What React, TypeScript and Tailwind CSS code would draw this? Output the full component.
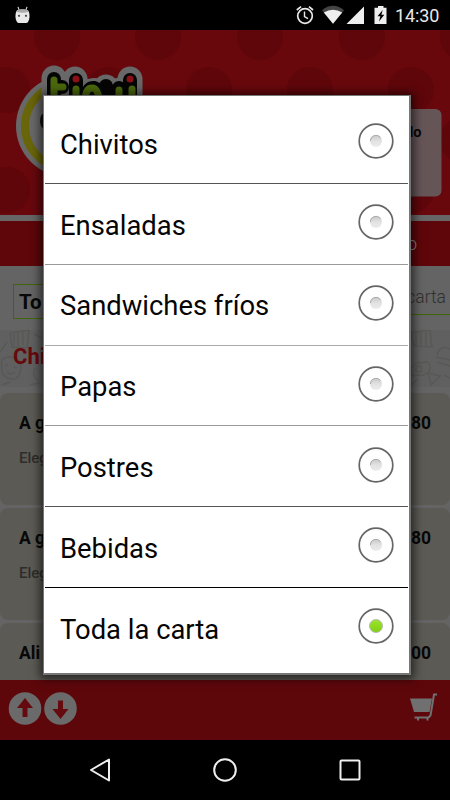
import React from 'react';

const categories = ['Chivitos', 'Ensaladas', 'Sandwiches fríos', 'Papas', 'Postres', 'Bebidas', 'Toda la carta'];

// divider under each row, the last row has none
const dividers = ['bg-[#555]', 'bg-[#999]', 'bg-[#aaa]', 'bg-[#999]', 'bg-[#555]', 'bg-black', 'bg-transparent'];

const dishes = [
  { name: 'A g', desc: 'Eleg', price: '80' },
  { name: 'A g', desc: 'Eleg', price: '80' },
  { name: 'Ali', desc: '', price: '00' },
];

const dots = [
  [57, 7], [158, 7], [260, 7], [362, 7], [463, 7],
  [7, 60], [108, 60], [209, 60], [310, 60], [411, 60],
  [57, 110], [158, 110], [260, 110], [362, 110], [463, 110],
  [7, 160], [108, 160], [209, 160], [310, 160], [411, 160],
];

const StatusBar: React.FC = () => (
  <div className="h-[30px] shrink-0 bg-black flex items-center justify-between pl-[15px] pr-[11px]">
    <svg className="w-[15px] h-[18px]" viewBox="0 0 15 18">
      <path d="M3 .8l1 3M12 .8l-1 3" stroke="#ddd" strokeWidth="1.1" />
      <path d="M1.5 5C2 3 13 3 13.5 5C15 8 15 13 13 16Q12.5 17 11 17H4Q2.5 17 2 16C0 13 0 8 1.5 5Z" fill="#e8e8e8" />
      <path d="M2 4.300Q7.500 2.200 13 4.300V6Q7.500 7.400 2 6Z" fill="#aaa" />
      <circle cx="4" cy="9.800" r="1.100" fill="#444" />
      <circle cx="11" cy="9.800" r="1.100" fill="#444" />
    </svg>
    <div className="flex items-center">
      <svg className="w-[100px] h-[20px]" viewBox="295 5 100 20">
        <g fill="none" stroke="#e8e8e8" strokeWidth="1.7">
          <circle cx="305" cy="16" r="7.300" />
          <path d="M304.500 11.500V16.500L308 18.700" strokeWidth="1.4" />
          <path d="M296.800 10L301 6.600M313 10L309 6.600" />
        </g>
        <path d="M322 10.200Q333 1.500 344 10.200L333 23.700Z" fill="#444" />
        <path d="M323.800 12.500Q333 7 342.200 12.500L333 23.700Z" fill="#eee" />
        <path d="M364 6.500V24H346.500Z" fill="#eee" />
        <path d="M374.500 7.700H378V6H383.500V7.700H386.500V24H374.500Z" fill="#eee" />
        <path d="M382.700 10L377.500 16.300H380.300L379 21.500L384.300 14.800H381.400Z" fill="#000" />
      </svg>
      <span className="text-[18px] leading-[30px] text-[#e8e8e8] tracking-[-0.1px] w-[44px] whitespace-nowrap pt-px">14:30</span>
    </div>
  </div>
);

const Header: React.FC = () => (
  <svg className="block w-[450px] h-[185px] shrink-0 bg-[#68080d]" viewBox="0 0 450 185">
    {dots.map(([cx, cy]) => (
      <circle key={`${cx}-${cy}`} cx={cx} cy={cy} r="23" fill="#5f060a" />
    ))}
    <circle cx="67" cy="96" r="51" fill="#686868" />
    <circle cx="67" cy="96" r="42" fill="none" stroke="#69650a" strokeWidth="8" />
    <ellipse cx="45" cy="91" rx="5" ry="8" fill="#111" />
    {/* white, black and green layers of the wordmark */}
    <g fill="none" strokeLinecap="round" strokeLinejoin="round">
      <path stroke="#686868" strokeWidth="25" d="M54 48V72M54 56H62M75 49V74M86 66Q92 57 100 63V76M106 57V74M120 60V74M130 49V74" />
      <path stroke="#050505" strokeWidth="14" d="M54 49V72M54 57H62M76 50V74M87 72Q87 57 94 58Q101 60 101 76M106 56V74M119 58V74M130 50V74" />
      <path stroke="#4b680c" strokeWidth="7" d="M54 50V72M54 57H63M76 59V74M85 72Q85 58 92 58Q99 58 100 76M119 60V74M132 59V74" />
    </g>
    <circle cx="76" cy="49" r="3.500" fill="#8b1018" />
    <circle cx="130" cy="49" r="3.500" fill="#8b1018" />
    <rect x="300" y="79" width="141.500" height="87.500" rx="6" fill="#655557" />
    <text x="421.500" y="106.500" textAnchor="end" fontSize="14.500" fontWeight="700" fill="#080808">lo</text>
  </svg>
);

const Doodles: React.FC = () => (
  <svg className="block w-[450px] h-[57px]" viewBox="0 0 450 57" fill="none" stroke="#585856" strokeWidth="1.5">
    <path d="M10 3L29 0L27 18L12 17ZM14 4v12M18 3v13M23 2v13M0 22L7 12M2 38Q-1 26 11 27Q24 29 20 42Q18 52 7 48Q1 44 2 38M5 36l3-2M14 37l3 1M7 42q4 4 8 0M34 4l8 4M2 55l8-3M30 55l9-2M36 38q-6 6 2 12" />
    <path d="M411 3L430 0L432 17L414 16ZM416 4v12M421 2v13M426 2v14M437 25Q440 14 450 19M436 27L450 30M437 32L450 36M411 39Q415 31 422 33Q431 29 430 39Q427 47 417 45Q410 48 411 39M416 39a3 3 0 1 0 6 0a3 3 0 1 0-6 0M428 43l12 3l-9 9ZM444 45l6 3M411 55l7-6" />
  </svg>
);

const Radio: React.FC<{ checked: boolean }> = ({ checked }) => (
  <svg className="w-9 h-9 shrink-0" viewBox="0 0 36 36">
    <defs>
      <linearGradient id="radioOff" x2="0" y2="1">
        <stop offset="0" stopColor="#c8c8c8" />
        <stop offset="0.5" stopColor="#e2e2e2" />
        <stop offset="1" stopColor="#ececec" />
      </linearGradient>
      <linearGradient id="radioOn" x2="0" y2="1">
        <stop offset="0" stopColor="#9be52c" />
        <stop offset="1" stopColor="#82cf12" />
      </linearGradient>
    </defs>
    <circle cx="18" cy="18" r="16.800" fill="#fff" stroke="#666" strokeWidth="1.7" />
    {checked ? (
      <circle cx="18" cy="18" r="6.500" fill="url(#radioOn)" stroke="#b9b9b9" strokeWidth="1" />
    ) : (
      <>
        <circle cx="18" cy="18" r="6" fill="url(#radioOff)" />
        <path d="M12.300 18A5.700 5.700 0 0 1 22.500 14.500" fill="none" stroke="#aaa" strokeWidth="1" />
      </>
    )}
  </svg>
);

const Footer: React.FC = () => (
  <div className="h-[60px] shrink-0 bg-[#5e070b] flex items-start justify-between pl-2 pr-3 pt-3">
    <svg className="w-[70px] h-[34px]" viewBox="0 0 70 34">
      <circle cx="17" cy="16.500" r="16.300" fill="#6a6a6a" />
      <circle cx="52.500" cy="16.500" r="16.300" fill="#6a6a6a" />
      <path d="M17 6L25 16H19.500V25H14.500V16H9Z" fill="#650a0e" />
      <path d="M52.500 27L60.500 17H55V8.500H50V17H44.500Z" fill="#650a0e" />
    </svg>
    <svg className="w-7 h-[30px] mt-px" viewBox="0 0 28 30">
      <path d="M0 5.500H22L19.500 19H4Z" fill="#707070" />
      <path d="M27 1.500H24L20.500 22.500L18.500 24.500H4.500M8 24v3.500M17.500 24v3.500" fill="none" stroke="#707070" strokeWidth="2" />
    </svg>
  </div>
);

const NavBar: React.FC = () => (
  <svg className="block w-[450px] h-[60px] shrink-0 bg-black" viewBox="0 0 450 60" fill="none" stroke="#eee" strokeWidth="2">
    <path d="M91 30L109 19.500V40.500Z" strokeLinejoin="round" />
    <circle cx="225" cy="30" r="10.800" />
    <rect x="340.500" y="20.500" width="19" height="19" rx="1" />
  </svg>
);

export default function App() {
  return (
    <div className="relative w-[450px] h-[800px] overflow-hidden flex flex-col bg-[#646464] font-['Roboto',sans-serif]">
      <StatusBar />
      <Header />
      <div className="h-[6px] shrink-0 bg-[#666]" />
      <div className="h-[45px] shrink-0 bg-[#5e060a] flex items-center justify-end pr-[33px] text-[18px] font-light text-[#888]">o</div>

      <div className="h-[64px] shrink-0 flex justify-between pl-[13px] pt-[18px]">
        <div className="w-[180px] h-[35px] border border-[#40660c] pl-[5px] text-[20.5px] leading-[34px] font-bold text-[#080808]">To</div>
        <div className="w-[150px] h-[31px] border-b border-[#3d6608] pr-[4px] text-right text-[17.5px] leading-[26px] font-light text-[#303030]">carta</div>
      </div>

      <div className="relative h-[57px] shrink-0 bg-[#606060]">
        <Doodles />
        <div className="absolute left-[13px] top-[12px] text-[22px] leading-[30px] font-bold text-[#68090d]">Chi</div>
      </div>

      <div className="flex-1 min-h-0 overflow-hidden pt-[6px] flex flex-col gap-[3px]">
        {dishes.map((dish, i) => (
          <div key={i} className="h-[112px] shrink-0 rounded-lg bg-[#5c5a54] px-[19px] pt-[18px]">
            <div className="flex justify-between text-[17.5px] leading-6 font-bold text-[#080808]">
              <span>{dish.name}</span>
              <span>{dish.price}</span>
            </div>
            <p className="mt-[13px] text-[15px] leading-5 font-medium text-[#2e2d2b]">{dish.desc}</p>
          </div>
        ))}
      </div>

      <Footer />
      <NavBar />

      <div className="absolute left-[43px] top-[95px] w-[368px] h-[580px] bg-white border border-[#777] border-r-2 border-b-2 shadow-[0_1px_9px_3px_rgba(0,0,0,0.6)] px-px">
        {categories.map((label, i) => (
          <div key={label} className={i === 0 ? 'h-[88px] pt-[7px] flex flex-col' : 'h-[80.8px] flex flex-col'}>
            <div className="flex-1 flex items-center justify-between pl-[15px] pr-[14px] pb-[3.5px]">
              <span className="text-[27.4px] leading-8 text-[#050505] pt-[7px]">{label}</span>
              <Radio checked={label === 'Toda la carta'} />
            </div>
            <div className={`h-px shrink-0 ${dividers[i]}`} />
          </div>
        ))}
      </div>
    </div>
  );
}
